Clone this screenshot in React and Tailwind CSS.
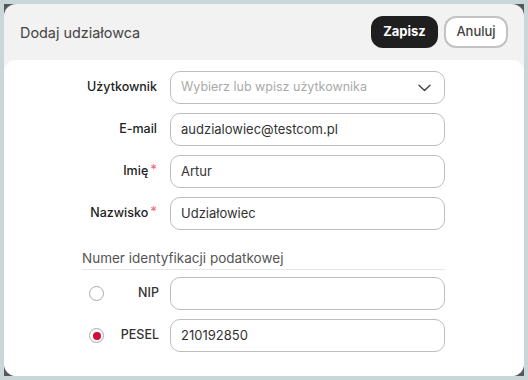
import React from "react";

function Field({ label, required, children }) {
  return (
    <div className="grid grid-cols-[75px_275px] gap-x-[13px] items-center">
      <div className="flex justify-end items-center text-[12.5px] font-medium text-[#222]">
        <span>{label}</span>
        {required && <span className="text-[#f26d7d] text-[13px] leading-none ml-[2px] relative -top-[2px]">*</span>}
      </div>
      {children}
    </div>
  );
}

function Input({ value, placeholder, chevron }) {
  return (
    <div className="h-[33px] rounded-[10px] border border-[#bdbdbd] bg-white flex items-center pl-[10px] pr-[13px] text-[13px] text-[#333]">
      <span className={value ? "flex-1" : "flex-1 text-[#aaaaaa] text-[12.5px]"}>{value || placeholder}</span>
      {chevron && (
        <svg width="13" height="8" viewBox="0 0 13 8" fill="none">
          <path d="M1 1.2L6.5 6.5L12 1.2" stroke="#444" strokeWidth="1.4" strokeLinecap="round" strokeLinejoin="round" />
        </svg>
      )}
    </div>
  );
}

function RadioField({ label, checked, value }) {
  return (
    <div className="grid grid-cols-[75px_275px] gap-x-[13px] items-center">
      <div className="flex items-center justify-between pl-[7px] text-[12.5px] font-medium text-[#333]">
        <span className="w-[15px] h-[15px] rounded-full border border-[#aaaaaa] bg-white flex items-center justify-center">
          {checked && <span className="w-[8px] h-[8px] rounded-full bg-[#d10b3c]" />}
        </span>
        <span className="mr-[-2px]">{label}</span>
      </div>
      <Input value={value} />
    </div>
  );
}

export default function App() {
  return (
    <div className="w-[528px] h-[380px] bg-[#c9d7d9] p-[4px]" style={{ fontFamily: "Inter, 'Noto Sans', sans-serif" }}>
      <div className="w-[520px] h-[372px] bg-[#545a5c]">
        <div className="w-full h-full rounded-[12px] bg-[#f2f2f2] flex flex-col overflow-hidden">
          <div className="h-[56px] shrink-0 flex items-center pl-[16px] pr-[16px]">
            <div className="flex-1 text-[14.4px] text-[#444] pt-[1px]">Dodaj udziałowca</div>
            <div className="flex gap-[6px] items-center">
              <button className="h-[32px] w-[67px] rounded-[12px] bg-[#1f1f1f] text-white text-[13px] font-bold">Zapisz</button>
              <button className="h-[32px] w-[64px] rounded-[12px] bg-white border-2 border-[#c2c2c2] text-[#444] text-[13px] font-medium">Anuluj</button>
            </div>
          </div>
          <div className="flex-1 bg-white rounded-[12px] pt-[11px] pl-[78px] flex flex-col">
            <div className="flex flex-col gap-[9px]">
              <Field label="Użytkownik">
                <Input placeholder="Wybierz lub wpisz użytkownika" chevron />
              </Field>
              <Field label="E-mail">
                <Input value="audzialowiec@testcom.pl" />
              </Field>
              <Field label="Imię" required>
                <Input value="Artur" />
              </Field>
              <Field label="Nazwisko" required>
                <Input value="Udziałowiec" />
              </Field>
            </div>
            <div className="w-[363px] mt-[20px] pb-[2px] border-b border-[#e8e8e8] text-[13.5px] text-[#555] leading-[17px]">
              Numer identyfikacji podatkowej
            </div>
            <div className="flex flex-col gap-[9px] mt-[7px]">
              <RadioField label="NIP" />
              <RadioField label="PESEL" checked value="210192850" />
            </div>
          </div>
        </div>
      </div>
    </div>
  );
}
